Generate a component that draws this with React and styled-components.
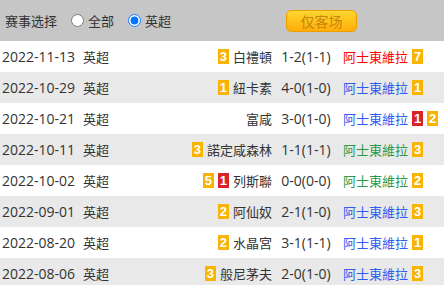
import React from 'react'
import styled, { createGlobalStyle } from 'styled-components'

const GlobalStyle = createGlobalStyle`
  html, body {
    margin: 0;
    padding: 0;
    background: #ffffff;
    overflow: hidden;
  }
  body {
    font-family: "Open Sans", "Noto Sans CJK SC", sans-serif;
    font-size: 14px;
    color: #333333;
  }
`

const Wrap = styled.div`
  width: 444px;
`

const Toolbar = styled.div`
  display: flex;
  align-items: center;
  height: 41px;
  padding-left: 5px;
  background-color: #c6c6c6;
  color: #333333;
  font-family: "Noto Sans CJK SC", sans-serif;
  font-size: 13px;
`

const Title = styled.span`
  margin-right: 14px;
`

const Choice = styled.label`
  display: flex;
  align-items: center;
  margin-right: 14px;

  & input {
    width: 13px;
    height: 13px;
    margin: 0 4px 0 0;
  }
`

const AwayButton = styled.button`
  margin-left: 101px;
  width: 71px;
  height: 22px;
  padding: 0;
  border: 1px solid #eba000;
  border-radius: 5px;
  background: linear-gradient(#ffd630, #ffad08);
  color: #c48608;
  font-family: "Noto Sans CJK SC", sans-serif;
  font-size: 14px;
  line-height: 20px;
`

const Row = styled.div`
  display: grid;
  grid-template-columns: 81px 40px 1fr 68px 104px;
  align-items: center;
  height: 31px;
  padding-left: 2px;
  background-color: ${props => (props.odd ? '#e9e9e9' : '#ffffff')};
`

const Cell = styled.div`
  white-space: nowrap;
`

const League = styled.div`
  white-space: nowrap;
  font-family: "Noto Sans CJK SC", sans-serif;
  font-size: 13px;
`

const Home = styled.div`
  display: flex;
  align-items: center;
  justify-content: flex-end;
  gap: 4px;
  white-space: nowrap;
`

const Team = styled.span`
  font-family: "Noto Sans CJK SC", sans-serif;
  font-size: 13px;
`

const Score = styled.div`
  text-align: center;
  white-space: nowrap;
`

const Away = styled.div`
  display: flex;
  align-items: center;
  gap: 4px;
  padding-left: 3px;
  white-space: nowrap;
  color: ${props => props.color};
`

const Badge = styled.span`
  display: inline-block;
  min-width: 11px;
  height: 15px;
  padding: 0 1px;
  box-sizing: border-box;
  text-align: center;
  font-family: "Liberation Sans", sans-serif;
  font-weight: bold;
  font-size: 13px;
  line-height: 15px;
  color: #ffffff;
  background-color: ${props => (props.red ? '#d8232a' : '#f8b400')};
`

const colors = {
  win: '#ff0000',
  lose: '#2f5cf0',
  draw: '#2a9a4a',
}

const rows = [
  { date: '2022-11-13', home: '白禮頓', hb: [['y', 3]], score: '1-2(1-1)', res: 'win', ab: [['y', 7]] },
  { date: '2022-10-29', home: '紐卡素', hb: [['y', 1]], score: '4-0(1-0)', res: 'lose', ab: [['y', 1]] },
  { date: '2022-10-21', home: '富咸', hb: [], score: '3-0(1-0)', res: 'lose', ab: [['r', 1], ['y', 2]] },
  { date: '2022-10-11', home: '諾定咸森林', hb: [['y', 3]], score: '1-1(1-1)', res: 'draw', ab: [['y', 3]] },
  { date: '2022-10-02', home: '列斯聯', hb: [['y', 5], ['r', 1]], score: '0-0(0-0)', res: 'draw', ab: [['y', 2]] },
  { date: '2022-09-01', home: '阿仙奴', hb: [['y', 2]], score: '2-1(1-0)', res: 'lose', ab: [['y', 3]] },
  { date: '2022-08-20', home: '水晶宮', hb: [['y', 2]], score: '3-1(1-1)', res: 'lose', ab: [['y', 1]] },
  { date: '2022-08-06', home: '般尼茅夫', hb: [['y', 3]], score: '2-0(1-0)', res: 'lose', ab: [['y', 3]] },
]

const renderBadges = list =>
  list.map((b, i) => (
    <Badge key={i + '-badge'} red={b[0] === 'r' ? 1 : 0}>
      {b[1]}
    </Badge>
  ))

const App = () => {
  return (
    <Wrap>
      <GlobalStyle />
      <Toolbar>
        <Title>赛事选择</Title>
        <Choice>
          <input type="radio" name="league" />
          全部
        </Choice>
        <Choice>
          <input type="radio" name="league" defaultChecked />
          英超
        </Choice>
        <AwayButton>仅客场</AwayButton>
      </Toolbar>
      {rows.map((r, i) => (
        <Row key={r.date} odd={i % 2 === 1 ? 1 : 0}>
          <Cell>{r.date}</Cell>
          <League>英超</League>
          <Home>
            {renderBadges(r.hb)}
            <Team>{r.home}</Team>
          </Home>
          <Score>{r.score}</Score>
          <Away color={colors[r.res]}>
            <Team>阿士東維拉</Team>
            {renderBadges(r.ab)}
          </Away>
        </Row>
      ))}
    </Wrap>
  )
}

export default App
